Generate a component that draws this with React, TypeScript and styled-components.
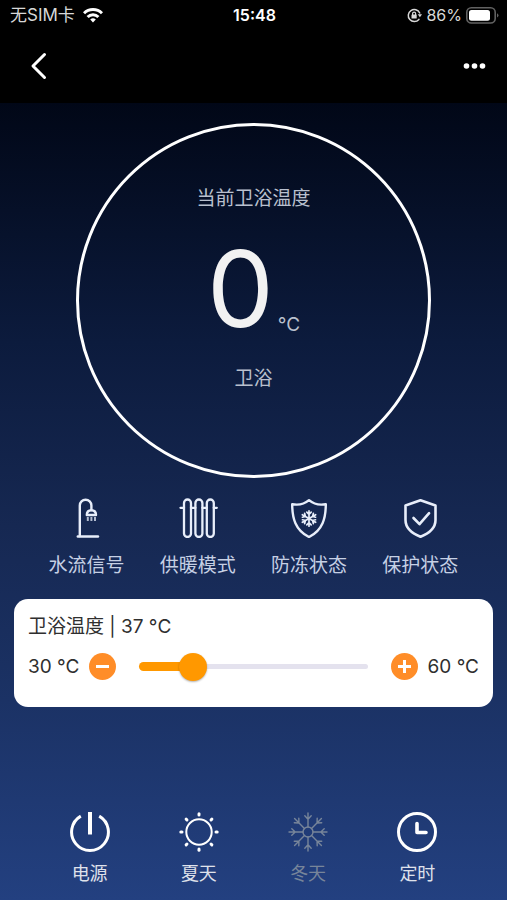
import React, { ReactElement, ReactNode, useState } from 'react'
import styled, { createGlobalStyle } from 'styled-components'

const COLOR = {
  black: '#000000',
  white: '#ffffff',
  soft: '#b9c0ce',
  label: '#c6d0e4',
  icon: '#e8eefa',
  disabled: '#77859a',
  text: '#2f2f2f',
  orange: '#ff9800',
  button: '#ff8d28',
  track: '#e4e2ee',
}

const MIN = 30
const MAX = 60

const GlobalStyle = createGlobalStyle`
  *, *::before, *::after {
    box-sizing: border-box;
  }
  body {
    margin: 0;
    background: ${COLOR.black};
    font-family: Inter, 'Noto Sans CJK SC', sans-serif;
    font-size: 19px;
    font-weight: 400;
  }
  button, input {
    font: inherit;
  }
  p {
    margin: 0;
  }
`

const StyledPage = styled.div`
  display: flex;
  flex-direction: column;
  min-height: 100vh;
`

const StyledStatusBar = styled.div`
  display: grid;
  grid-template-columns: 1fr auto 1fr;
  align-items: center;
  height: 30px;
  padding: 0 8px 0 10px;
  color: #d8d8d8;
  font-size: 16px;
  line-height: 24px;
`

const StyledStatusGroup = styled.div<{ $end?: boolean }>`
  display: flex;
  align-items: center;
  justify-content: ${({ $end }) => ($end ? 'flex-end' : 'flex-start')};
  gap: ${({ $end }) => ($end ? '4px' : '8px')};
`

const StyledCarrier = styled.span`
  font-size: 17px;
`

const StyledTime = styled.time`
  color: ${COLOR.white};
  font-weight: 600;
`

const StyledNav = styled.header`
  display: flex;
  align-items: center;
  justify-content: space-between;
  height: 73px;
  padding: 0 17px 2px 23px;
`

const StyledNavButton = styled.button`
  display: flex;
  align-items: center;
  justify-content: center;
  width: 30px;
  height: 40px;
  padding: 0;
  border: none;
  background: none;
  color: ${COLOR.white};
  cursor: pointer;
`

const StyledMain = styled.main`
  display: flex;
  flex: 1;
  flex-direction: column;
  background: linear-gradient(#010717 0%, #0c1b3d 30%, #162852 53%, #1b3265 75%, #234080 100%);
`

const StyledDial = styled.section`
  display: flex;
  flex-direction: column;
  align-items: center;
  width: 70%;
  max-width: 480px;
  aspect-ratio: 1;
  margin: 20px auto 0;
  padding-top: 59px;
  border: 3px solid ${COLOR.white};
  border-radius: 50%;
  color: ${COLOR.soft};
`

const StyledCaption = styled.p`
  line-height: 28px;
`

const StyledReading = styled.div`
  display: flex;
  align-items: flex-end;
  gap: 4px;
  margin: 28px 0;
  line-height: 24px;
`

const StyledValue = styled.span`
  color: #f2f2f2;
  font-size: 106px;
  line-height: 96px;
`

const StyledStates = styled.ul`
  display: grid;
  grid-template-columns: repeat(4, 1fr);
  margin: 20px 0 0;
  padding: 0 31px;
  list-style: none;
`

const StyledState = styled.li`
  display: flex;
  flex-direction: column;
  align-items: center;
  gap: 15px;
  color: ${COLOR.icon};
  line-height: 26px;
  white-space: nowrap;
`

const StyledStateLabel = styled.span`
  color: ${COLOR.label};
`

const StyledCard = styled.section`
  margin: 20px 14px 24px;
  padding: 15px 14px 26px;
  border-radius: 14px;
  background: ${COLOR.white};
  color: ${COLOR.text};
  line-height: 26px;
`

const StyledControl = styled.div`
  display: flex;
  align-items: center;
  gap: 10px;
  margin-top: 13px;
  line-height: 28px;
`

const StyledStepButton = styled.button`
  display: flex;
  flex: none;
  align-items: center;
  justify-content: center;
  width: 27px;
  height: 27px;
  padding: 0;
  border: none;
  border-radius: 50%;
  background: ${COLOR.button};
  color: ${COLOR.white};
  cursor: pointer;
`

const StyledSlider = styled.div`
  position: relative;
  display: flex;
  flex: 1;
  align-items: center;
  height: 28px;
  margin: 0 13px;
`

const StyledTrack = styled.div`
  flex: 1;
  height: 5px;
  border-radius: 3px;
  background: ${COLOR.track};
`

const StyledFill = styled.div`
  position: absolute;
  left: 0;
  height: 9px;
  border-radius: 5px;
  background: ${COLOR.orange};
`

// wider than the track by half a thumb on each side
const StyledRange = styled.input`
  position: absolute;
  left: -14px;
  width: calc(100% + 28px);
  height: 28px;
  margin: 0;
  appearance: none;
  background: none;
  cursor: pointer;
  &::-webkit-slider-thumb {
    appearance: none;
    width: 28px;
    height: 28px;
    border: none;
    border-radius: 50%;
    background: ${COLOR.orange};
    box-shadow: 0 1px 2px rgba(0, 0, 0, 0.3);
  }
`

const StyledModes = styled.nav`
  display: grid;
  grid-template-columns: repeat(4, 1fr);
  margin-top: auto;
  padding: 0 35px 13px;
`

const StyledMode = styled.button`
  display: flex;
  flex-direction: column;
  align-items: center;
  gap: 9px;
  padding: 0;
  border: none;
  background: none;
  color: ${COLOR.white};
  line-height: 26px;
  cursor: pointer;
  &:disabled {
    color: ${COLOR.disabled};
    cursor: default;
  }
`

const StyledModeLabel = styled.span`
  font-size: 18px;
  opacity: 0.85;
  ${StyledMode}:disabled & {
    opacity: 1;
  }
`

const Icon = ({
  children,
  width = 40,
  height = 40,
  stroke = 2,
}: {
  children: ReactNode
  width?: number
  height?: number
  stroke?: number
}): ReactElement => (
  <svg
    width={width}
    height={height}
    viewBox={`0 0 ${width} ${height}`}
    fill="none"
    stroke="currentColor"
    strokeWidth={stroke}
    strokeLinecap="round"
    strokeLinejoin="round"
    aria-hidden="true"
  >
    {children}
  </svg>
)

const WifiIcon = (): ReactElement => (
  <Icon width={20} height={16} stroke={3}>
    <g strokeLinecap="butt" stroke={COLOR.white}>
      <path d="M1 6.3a12.6 12.6 0 0 1 18 0" />
      <path d="M4.6 10a7.6 7.6 0 0 1 10.8 0" />
      <path d="M10 15.5l-2.8-2.9a4 4 0 0 1 5.6 0z" fill={COLOR.white} stroke="none" />
    </g>
  </Icon>
)

const LockIcon = (): ReactElement => (
  <Icon width={15} height={15} stroke={1.5}>
    <path d="M11.9 11.4A6 6 0 1 1 12.7 5" />
    <path d="M10.8 6.2h4.2l-2.1 3z" fill="currentColor" stroke="none" />
    <rect x="4.500" y="6.500" width="5.200" height="4" rx="0.600" fill="currentColor" stroke="none" />
    <path d="M5.600 7V5.600a1.500 1.500 0 0 1 3 0V7" strokeWidth="1.200" />
  </Icon>
)

const BatteryIcon = (): ReactElement => (
  <Icon width={33} height={17} stroke={1.6}>
    <rect x="0.8" y="0.8" width="28.4" height="15.2" rx="4.5" stroke="#626262" />
    <rect x="3" y="3" width="21" height="10.8" rx="2.5" fill={COLOR.white} stroke="none" />
    <path d="M31 6.200q3 2.200 0 4.400z" fill="#626262" stroke="none" />
  </Icon>
)

const ShowerIcon = (): ReactElement => (
  <Icon stroke={2.4}>
    <path d="M12.800 38V7.500a5.800 5.800 0 0 1 11.600 0V12" />
    <path d="M10.800 38.500H31" />
    <path d="M19.800 17c0-3 1.600-4.800 4.600-4.800s4.600 1.800 4.600 4.800z" stroke="currentColor" />
    <path
      d="M20.800 19.200v3.600M24.400 19.200v3.600M28 19.200v3.600"
      strokeWidth="2"
      strokeLinecap="butt"
      strokeDasharray="1.500 0.600"
    />
  </Icon>
)

const RadiatorIcon = (): ReactElement => (
  <Icon stroke={2.3}>
    <rect x="6" y="1.500" width="7" height="37.500" rx="3.500" />
    <rect x="17.400" y="1.500" width="7" height="37.500" rx="3.500" />
    <rect x="28.800" y="1.500" width="7" height="37.500" rx="3.500" />
    <path d="M2.500 9.800h3.500M13 9.800h4.400M24.400 9.800h4.400M35.800 9.800h3" />
  </Icon>
)

const FrostShieldIcon = (): ReactElement => (
  <Icon stroke={2.4}>
    <path d="M20 2.200C15.500 6 9.500 7.400 3.200 6.200C3.200 20 6.200 32 20 39C33.800 32 36.800 20 36.800 6.200C30.500 7.400 24.500 6 20 2.200z" />
    <g strokeWidth="1.7">
      {[0, 60, 120, 180, 240, 300].map((angle) => (
        <path
          key={angle}
          d="M20 20.500v-7.700M17.800 14.200l2.200 2.200 2.200-2.200"
          transform={`rotate(${angle} 20 20.500)`}
        />
      ))}
    </g>
  </Icon>
)

const CheckShieldIcon = (): ReactElement => (
  <Icon stroke={2.6}>
    <path d="M20.500 2.200L35.500 7.500V22C35.500 29.500 30 35 20.500 38.800C11 35 5.500 29.500 5.500 22V7.500z" />
    <path d="M13.500 20l6 6.200 9.600-11" />
  </Icon>
)

const PowerIcon = (): ReactElement => (
  <Icon stroke={3}>
    <path d="M10.800 4.100A18.400 18.400 0 1 0 29.200 4.100" strokeLinecap="butt" />
    <path d="M20 0V22.500" strokeWidth="4" strokeLinecap="butt" />
  </Icon>
)

const SunIcon = (): ReactElement => (
  <Icon stroke={2}>
    <circle cx="20" cy="20" r="12.700" />
    {[0, 45, 90, 135, 180, 225, 270, 315].map((angle) => (
      <path
        key={angle}
        d="M20 1.800v1.200"
        strokeWidth="3"
        transform={`rotate(${angle} 20 20)`}
      />
    ))}
  </Icon>
)

const SnowIcon = (): ReactElement => (
  <Icon stroke={1.4}>
    <circle cx="20" cy="20" r="5" />
    {[0, 45, 90, 135, 180, 225, 270, 315].map((angle) => (
      <path
        key={angle}
        d="M20 15V1M16.800 3.800l3.200 3.400 3.200-3.400"
        transform={`rotate(${angle} 20 20)`}
      />
    ))}
  </Icon>
)

const ClockIcon = (): ReactElement => (
  <Icon stroke={3}>
    <circle cx="20" cy="20" r="18.500" />
    <path d="M20 11.500V20.500H29" strokeWidth="3.600" />
  </Icon>
)

const STATES = [
  { label: '水流信号', icon: <ShowerIcon /> },
  { label: '供暖模式', icon: <RadiatorIcon /> },
  { label: '防冻状态', icon: <FrostShieldIcon /> },
  { label: '保护状态', icon: <CheckShieldIcon /> },
]

const MODES = [
  { label: '电源', icon: <PowerIcon /> },
  { label: '夏天', icon: <SunIcon /> },
  { label: '冬天', icon: <SnowIcon />, disabled: true },
  { label: '定时', icon: <ClockIcon /> },
]

const StatusBar = (): ReactElement => (
  <StyledStatusBar>
    <StyledStatusGroup>
      <StyledCarrier>无SIM卡</StyledCarrier>
      <WifiIcon />
    </StyledStatusGroup>
    <StyledTime>15:48</StyledTime>
    <StyledStatusGroup $end>
      <LockIcon />
      <span>86%</span>
      <BatteryIcon />
    </StyledStatusGroup>
  </StyledStatusBar>
)

const TemperatureCard = (): ReactElement => {
  const [target, setTarget] = useState(37)
  const percent = ((target - MIN) / (MAX - MIN)) * 100

  return (
    <StyledCard>
      <label htmlFor="target">卫浴温度 | {target} °C</label>
      <StyledControl>
        <span>{MIN} °C</span>
        <StyledStepButton
          aria-label="-"
          onClick={(): void => setTarget(Math.max(MIN, target - 1))}
        >
          <Icon width={27} height={27} stroke={3}>
            <path d="M7 13.500h13" strokeLinecap="butt" />
          </Icon>
        </StyledStepButton>
        <StyledSlider>
          <StyledTrack />
          <StyledFill style={{ width: `${percent}%` }} />
          <StyledRange
            id="target"
            type="range"
            min={MIN}
            max={MAX}
            value={target}
            onChange={(e): void => setTarget(Number(e.target.value))}
          />
        </StyledSlider>
        <StyledStepButton
          aria-label="+"
          onClick={(): void => setTarget(Math.min(MAX, target + 1))}
        >
          <Icon width={27} height={27} stroke={3}>
            <path d="M7 13.500h13M13.500 7v13" strokeLinecap="butt" />
          </Icon>
        </StyledStepButton>
        <span>{MAX} °C</span>
      </StyledControl>
    </StyledCard>
  )
}

const App = (): ReactElement => (
  <StyledPage>
    <GlobalStyle />
    <StatusBar />
    <StyledNav>
      <StyledNavButton aria-label="返回">
        <Icon width={30} height={30} stroke={3}>
          <path d="M21.500 3.500L10 15l11.500 11.500" />
        </Icon>
      </StyledNavButton>
      <StyledNavButton aria-label="更多">
        <Icon width={30} height={30}>
          <g fill="currentColor" stroke="none">
            <circle cx="6.500" cy="15" r="2.800" />
            <circle cx="14.500" cy="15" r="2.800" />
            <circle cx="22.500" cy="15" r="2.800" />
          </g>
        </Icon>
      </StyledNavButton>
    </StyledNav>
    <StyledMain>
      <StyledDial>
        <StyledCaption>当前卫浴温度</StyledCaption>
        <StyledReading>
          <StyledValue>0</StyledValue>
          <span>°C</span>
        </StyledReading>
        <StyledCaption>卫浴</StyledCaption>
      </StyledDial>
      <StyledStates>
        {STATES.map(({ label, icon }) => (
          <StyledState key={label}>
            {icon}
            <StyledStateLabel>{label}</StyledStateLabel>
          </StyledState>
        ))}
      </StyledStates>
      <TemperatureCard />
      <StyledModes>
        {MODES.map(({ label, icon, disabled }) => (
          <StyledMode key={label} disabled={disabled}>
            {icon}
            <StyledModeLabel>{label}</StyledModeLabel>
          </StyledMode>
        ))}
      </StyledModes>
    </StyledMain>
  </StyledPage>
)

export default App
